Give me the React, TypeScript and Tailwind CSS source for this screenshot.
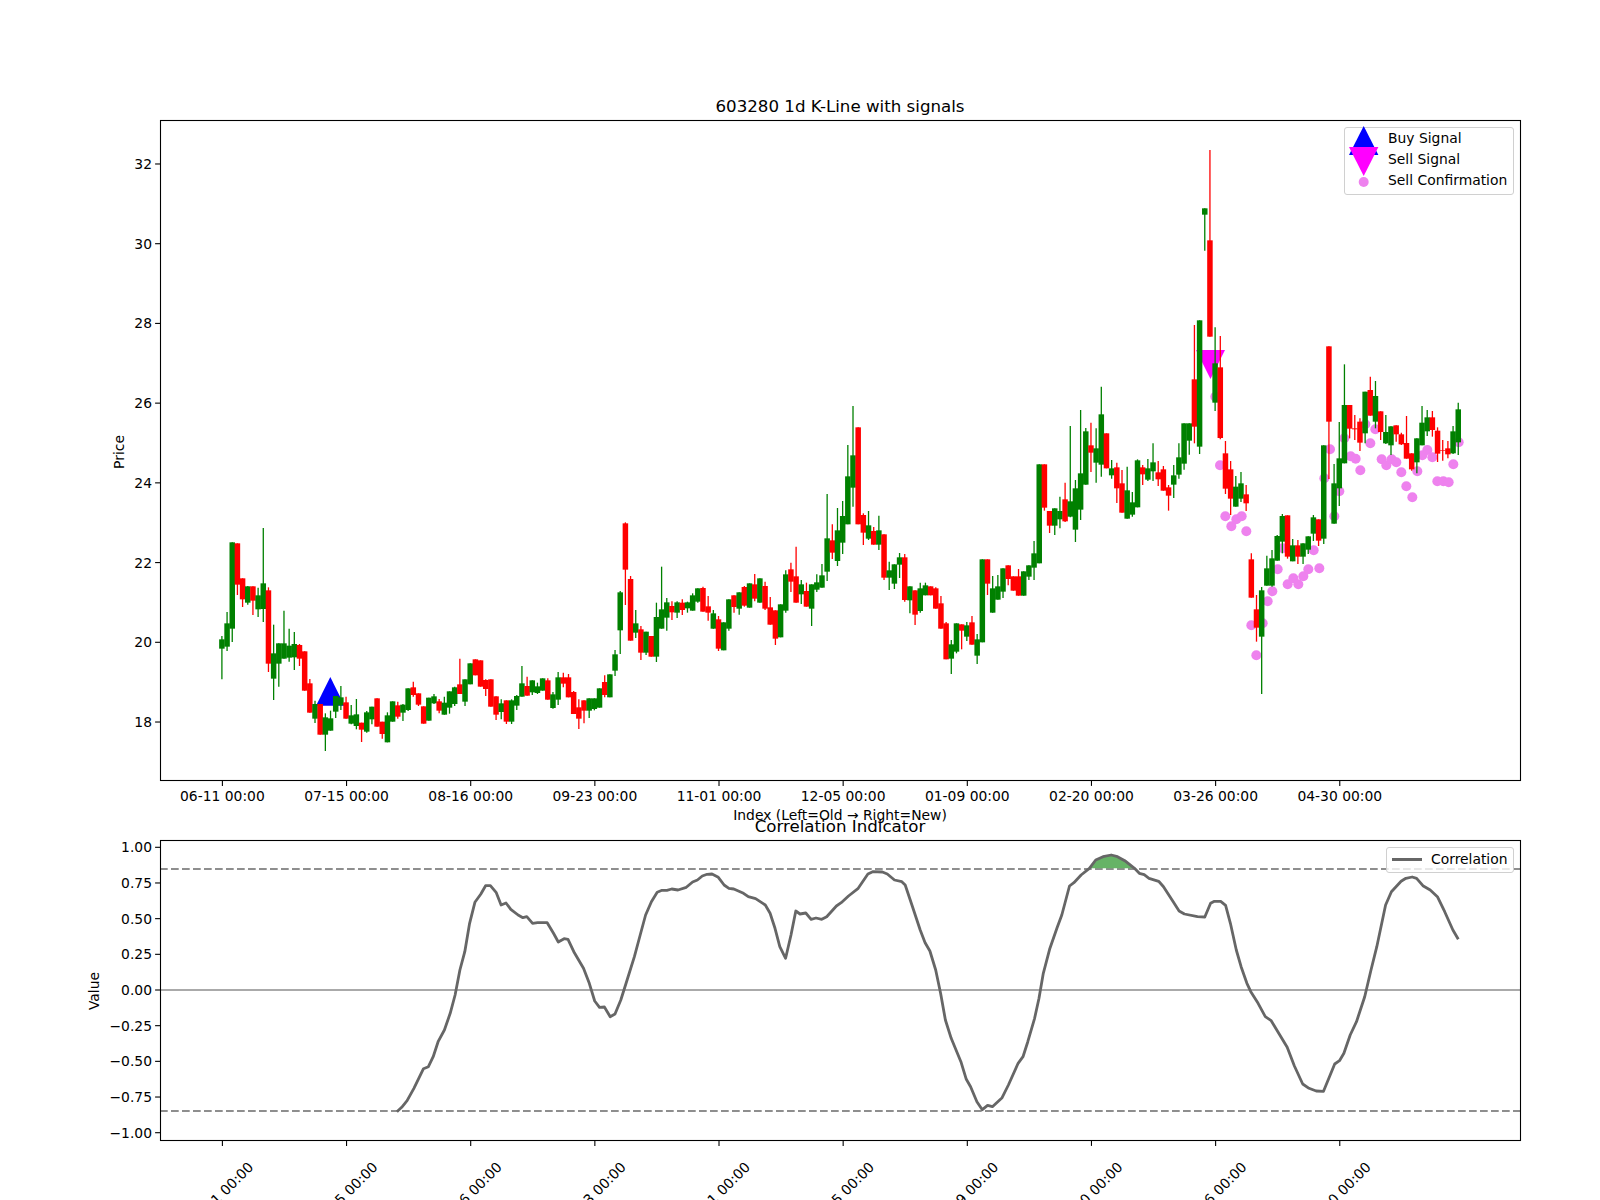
type Bar = [number, number, number, number, 'g' | 'r'];

// wick top, body top, body bottom, wick bottom, colour. Read off the chart in 3x steps.
const barsA: Bar[] = [
  [468, 478, 506, 598, 'g'], [396, 430, 500, 513, 'g'], [187, 187, 446, 486, 'g'], [190, 190, 314, 345, 'r'], [295, 295, 358, 381, 'r'],
  [318, 319, 368, 374, 'g'], [319, 319, 362, 405, 'r'], [323, 346, 388, 411, 'g'], [144, 310, 387, 426, 'g'], [322, 331, 551, 576, 'r'],
  [434, 520, 596, 660, 'g'], [490, 490, 551, 620, 'g'], [392, 490, 536, 536, 'g'], [446, 497, 533, 545, 'g'], [456, 492, 532, 570, 'g'],
  [492, 495, 536, 558, 'r'], [514, 514, 632, 632, 'r'], [597, 610, 698, 698, 'r'], [662, 672, 716, 729, 'g'], [672, 672, 764, 764, 'r'],
  [700, 712, 764, 813, 'g'], [692, 715, 752, 752, 'g'], [648, 648, 695, 714, 'g'], [618, 652, 676, 690, 'g'], [650, 667, 716, 716, 'r'],
  [675, 706, 731, 733, 'g'], [657, 703, 738, 748, 'g'], [728, 728, 749, 786, 'r'], [693, 697, 755, 758, 'g'], [680, 680, 718, 733, 'g'],
  [655, 655, 740, 740, 'r'], [725, 725, 762, 776, 'r'], [697, 706, 787, 787, 'g'], [664, 664, 725, 725, 'g'], [665, 676, 710, 716, 'r'],
  [672, 674, 698, 723, 'g'], [625, 625, 690, 693, 'g'], [605, 622, 645, 650, 'r'], [640, 640, 674, 678, 'r'], [679, 679, 731, 731, 'r'],
  [653, 653, 722, 722, 'g'], [642, 649, 670, 672, 'g'], [657, 664, 692, 700, 'r'], [650, 668, 704, 704, 'g'], [634, 634, 683, 701, 'g'],
  [620, 622, 672, 678, 'g'], [536, 613, 642, 642, 'r'], [598, 598, 665, 678, 'g'], [550, 550, 613, 613, 'g'], [538, 538, 586, 586, 'r'],
  [541, 541, 620, 620, 'r'], [598, 600, 627, 648, 'r'], [598, 598, 680, 680, 'r'], [649, 649, 704, 720, 'r'], [658, 670, 696, 718, 'g'],
  [661, 661, 725, 732, 'r'], [658, 661, 725, 732, 'g'], [645, 648, 677, 690, 'g'], [558, 610, 650, 650, 'g'], [590, 618, 647, 647, 'r'],
  [601, 601, 637, 645, 'g'], [608, 619, 639, 642, 'g'], [595, 595, 632, 632, 'g'], [595, 601, 659, 659, 'r'], [636, 643, 684, 686, 'g'],
  [576, 592, 659, 675, 'g'], [578, 592, 611, 622, 'r'], [582, 592, 652, 652, 'r'], [633, 636, 702, 702, 'r'], [658, 682, 716, 747, 'r'],
  [661, 661, 692, 730, 'r'], [655, 655, 692, 714, 'g'], [655, 655, 687, 691, 'g'], [625, 625, 683, 683, 'g'], [586, 606, 645, 652, 'r'],
  [583, 583, 652, 652, 'g'], [510, 523, 572, 588, 'g'],
];

const barsB: Bar[] = [
  [633, 637, 751, 822, 'g'], [427, 430, 569, 675, 'r'], [588, 597, 782, 782, 'r'], [690, 730, 758, 774, 'g'], [738, 748, 818, 840, 'r'],
  [755, 755, 818, 825, 'g'], [768, 768, 830, 830, 'r'], [668, 711, 830, 846, 'g'], [560, 688, 746, 746, 'g'], [654, 667, 713, 752, 'g'],
  [664, 678, 697, 720, 'r'], [664, 667, 698, 714, 'g'], [658, 668, 690, 705, 'r'], [665, 667, 685, 698, 'g'], [640, 646, 692, 692, 'g'],
  [625, 625, 665, 668, 'g'], [620, 624, 695, 695, 'r'], [648, 679, 698, 722, 'r'], [690, 700, 746, 746, 'g'], [708, 718, 806, 813, 'r'],
  [727, 727, 811, 811, 'g'], [658, 658, 746, 752, 'g'], [646, 646, 681, 698, 'r'], [637, 637, 686, 704, 'g'], [618, 621, 677, 680, 'r'],
  [610, 610, 683, 683, 'g'], [582, 613, 656, 664, 'r'], [595, 595, 668, 668, 'g'], [605, 618, 686, 690, 'r'], [651, 682, 734, 734, 'r'],
  [691, 691, 776, 795, 'r'], [673, 673, 772, 772, 'g'], [571, 583, 692, 698, 'g'], [548, 568, 605, 636, 'r'], [500, 589, 668, 668, 'r'],
  [600, 613, 643, 672, 'g'], [608, 633, 680, 680, 'r'], [613, 613, 686, 738, 'g'], [583, 607, 629, 636, 'g'], [552, 586, 623, 623, 'g'],
  [342, 475, 575, 603, 'g'], [433, 481, 518, 537, 'r'], [384, 451, 543, 558, 'g'], [363, 408, 488, 522, 'g'], [195, 289, 433, 433, 'g'],
  [78, 226, 323, 380, 'g'], [142, 142, 433, 433, 'r'], [400, 405, 458, 495, 'r'], [393, 436, 476, 480, 'g'], [441, 453, 494, 494, 'r'],
  [407, 451, 494, 510, 'g'], [463, 463, 593, 600, 'r'], [545, 571, 593, 630, 'g'], [553, 553, 611, 627, 'g'], [519, 532, 554, 594, 'g'],
  [522, 532, 660, 665, 'r'], [619, 619, 661, 700, 'g'], [631, 631, 704, 735, 'r'], [608, 625, 693, 698, 'g'], [608, 616, 646, 646, 'g'],
  [619, 619, 646, 646, 'r'], [622, 625, 686, 686, 'r'], [648, 670, 746, 746, 'r'], [726, 730, 838, 838, 'r'], [780, 793, 836, 882, 'g'],
  [730, 730, 815, 820, 'g'], [733, 733, 752, 808, 'r'], [726, 736, 770, 783, 'g'], [708, 727, 794, 794, 'r'], [762, 778, 827, 852, 'g'],
  [538, 538, 787, 787, 'g'], [538, 538, 611, 645, 'r'], [588, 625, 698, 698, 'g'], [585, 619, 659, 659, 'g'], [565, 565, 635, 654, 'g'],
  [556, 556, 597, 616, 'r'], [589, 589, 632, 632, 'r'], [567, 589, 647, 647, 'r'], [574, 574, 647, 647, 'g'], [556, 556, 590, 600, 'g'],
  [483, 520, 563, 600, 'g'], [253, 253, 550, 550, 'g'], [253, 253, 383, 392, 'r'], [393, 393, 437, 459, 'r'], [385, 385, 437, 465, 'g'],
  [350, 393, 418, 445, 'g'], [308, 358, 424, 426, 'r'], [138, 364, 410, 412, 'g'], [300, 325, 449, 486, 'g'], [90, 280, 389, 420, 'g'],
  [144, 154, 314, 314, 'g'], [128, 196, 218, 276, 'r'], [145, 205, 248, 308, 'g'],
];

const barsC: Bar[] = [
  [-40, 43, 194, 230, 'g'], [100, 100, 205, 205, 'r'], [180, 205, 226, 236, 'g'], [188, 202, 265, 309, 'r'], [210, 250, 338, 338, 'r'],
  [200, 271, 356, 356, 'g'], [276, 307, 344, 350, 'g'], [178, 181, 322, 322, 'g'], [195, 202, 223, 255, 'r'], [177, 205, 239, 243, 'g'],
  [130, 187, 214, 243, 'g'], [183, 217, 238, 258, 'r'], [198, 208, 272, 272, 'r'], [255, 262, 287, 332, 'r'], [195, 226, 254, 294, 'g'],
  [130, 172, 224, 236, 'g'], [70, 70, 191, 209, 'g'], [70, 70, 122, 164, 'g'], [-225, -62, 80, 130, 'r'], [-239, -239, 140, 162, 'g'],
  [-575, -575, -556, -448, 'g'], [-750, -479, -190, -190, 'r'], [-218, -110, 8, 33, 'g'], [-192, -98, 114, 118, 'r'], [123, 160, 266, 282, 'r'],
  [183, 208, 296, 345, 'r'], [228, 260, 320, 320, 'g'], [216, 250, 296, 306, 'g'], [255, 283, 310, 333, 'r'], [460, 478, 593, 593, 'r'],
  [585, 628, 683, 725, 'r'], [561, 571, 710, 882, 'g'], [467, 505, 557, 557, 'g'], [450, 475, 557, 560, 'g'], [405, 408, 482, 482, 'g'],
  [342, 348, 425, 460, 'g'], [346, 346, 470, 476, 'r'], [417, 436, 484, 484, 'g'], [420, 436, 470, 492, 'r'], [430, 430, 470, 492, 'g'],
  [409, 409, 449, 462, 'g'], [345, 352, 401, 423, 'g'], [358, 358, 422, 438, 'r'], [136, 136, 416, 432, 'g'], [-161, -161, 65, 237, 'r'],
  [192, 250, 371, 371, 'g'], [66, 175, 265, 318, 'g'], [-107, 15, 190, 190, 'g'], [15, 15, 86, 115, 'r'], [45, 85, 88, 120, 'r'],
  [55, 65, 128, 153, 'r'], [-25, -25, 100, 130, 'g'], [-70, -30, 47, 47, 'r'], [-57, -12, 65, 85, 'g'], [34, 34, 96, 120, 'r'],
  [45, 96, 130, 132, 'g'], [79, 79, 136, 165, 'g'], [76, 76, 103, 125, 'r'], [98, 103, 133, 135, 'r'], [48, 129, 176, 176, 'r'],
  [160, 160, 208, 212, 'r'], [115, 115, 187, 220, 'g'], [18, 68, 136, 136, 'g'], [30, 52, 94, 108, 'g'], [33, 52, 90, 110, 'r'],
  [82, 92, 161, 186, 'r'], [120, 150, 152, 182, 'r'], [123, 145, 163, 175, 'r'], [78, 94, 160, 162, 'g'], [8, 28, 127, 165, 'g'],
];

const confirmDots = [
  [346, -10], [360, 196], [376, 349], [394, 379], [409, 358], [425, 349], [439, 394], [454, 676], [469, 766], [488, 670], [503, 604], [517, 574],
  [533, 508], [548, 445], [563, 553], [580, 535], [595, 553], [610, 529], [625, 508], [641, 451], [658, 505], [673, 235], [690, 148], [718, 274],
  [703, 349], [733, 115], [752, 169], [767, 176], [781, 211], [796, 73], [811, 130], [826, 88], [845, 178], [859, 196], [875, 178], [889, 187],
  [904, 217], [919, 259], [937, 292], [952, 214], [967, 166], [982, 150], [997, 172], [1012, 244], [1030, 244], [1046, 247], [1060, 193], [1076, 127],
];

const corrLeft = [
  [695, 935], [705, 922], [716, 902], [730, 865], [750, 806], [760, 800], [770, 770], [780, 725], [793, 690], [805, 640], [815, 585], [825, 510],
  [835, 455], [845, 370], [856, 307], [868, 283], [878, 257], [888, 257], [900, 278], [910, 315], [920, 309], [930, 328], [945, 345], [955, 353],
  [963, 350], [975, 370], [985, 368], [1005, 368], [1018, 400], [1028, 426], [1040, 416], [1048, 418], [1060, 455], [1080, 505], [1092, 550],
  [1103, 603], [1113, 622], [1123, 621], [1135, 650], [1145, 642], [1157, 600], [1170, 540], [1185, 470], [1197, 405], [1208, 345], [1220, 305],
  [1232, 277], [1242, 271], [1252, 271], [1262, 267], [1275, 270], [1292, 262], [1305, 246], [1315, 240], [1325, 228], [1335, 223], [1345, 222],
  [1358, 232], [1370, 255], [1380, 265], [1390, 267], [1410, 280], [1420, 290], [1435, 296], [1455, 315], [1465, 340], [1475, 385], [1485, 440],
  [1497, 475], [1508, 405], [1518, 333],
];

const corrRight = [
  [0, 342], [12, 339], [23, 358], [33, 354], [45, 358], [55, 350], [75, 318], [85, 308], [100, 288], [120, 265], [140, 222], [150, 215], [170, 216],
  [180, 222], [195, 240], [210, 245], [217, 255], [232, 320], [248, 390], [258, 428], [268, 453], [280, 510], [290, 580], [300, 660], [312, 715],
  [332, 785], [343, 838], [352, 860], [365, 905], [376, 929], [387, 916], [397, 920], [417, 893], [430, 855], [450, 790], [460, 770], [470, 725],
  [484, 655], [493, 595], [502, 520], [515, 448], [530, 385], [540, 345], [556, 258], [565, 248], [580, 225], [597, 205], [610, 180], [625, 170],
  [642, 165], [655, 170], [670, 182], [690, 205], [700, 220], [710, 224], [720, 235], [740, 244], [750, 260], [770, 305], [782, 333], [793, 342],
  [820, 350], [835, 351], [847, 310], [855, 304], [868, 304], [878, 316], [888, 370], [900, 450], [910, 500], [922, 550], [930, 575], [945, 610],
  [960, 650], [972, 662], [1005, 742], [1020, 798], [1037, 852], [1050, 865], [1065, 873], [1080, 874], [1103, 792], [1113, 782], [1122, 760],
  [1135, 705], [1148, 665], [1165, 590], [1178, 510], [1190, 440], [1208, 315], [1220, 275], [1240, 244], [1250, 235], [1263, 231], [1272, 235],
  [1285, 257], [1300, 270], [1315, 290], [1330, 335], [1347, 390], [1358, 418],
];

const dates = ['06-11', '07-15', '08-16', '09-23', '11-01', '12-05', '01-09', '02-20', '03-26', '04-30'];
const tickX = dates.map((_, n) => 222.4 + 5.173 * n * 24);

const candles = [
  ...barsA.map((b) => ({ b, base: 480 })),
  ...barsB.map((b) => ({ b, base: 380 })),
  ...barsC.map((b) => ({ b, base: 400 })),
];

const corrPts = [
  ...corrLeft.map(([x, y]) => [60 + x / 2.063, 800 + y / 3]),
  ...corrRight.map(([x, y]) => [800 + x / 2.063, 800 + y / 3]),
];
const corrLine = corrPts.map(([x, y]) => `${x.toFixed(1)},${y.toFixed(1)}`).join(' ');
const peak = corrRight.filter(([x]) => x >= 597 && x <= 690);
const peakFill = peak.map(([x, y]) => `${(800 + x / 2.063).toFixed(1)},${(800 + y / 3).toFixed(1)}`).join(' ');

function XTicks({ y }: { y: number }) {
  return (
    <>
      {tickX.map((x) => (
        <line key={x} x1={x} x2={x} y1={y} y2={y + 4.9} stroke="black" strokeWidth={1.1} />
      ))}
    </>
  );
}

function YTick({ y, label }: { y: number; label: string }) {
  return (
    <>
      <line x1={155.1} x2={160} y1={y} y2={y} stroke="black" strokeWidth={1.1} />
      <text x={152} y={y + 5} textAnchor="end">{label}</text>
    </>
  );
}

function PricePlot() {
  return (
    <svg viewBox="0 120 1600 695" className="block w-[1600px] h-[695px] overflow-visible text-[13.89px]">
      {confirmDots.map(([x, y]) => (
        <circle key={`${x}-${y}`} cx={1100 + x / 3} cy={400 + y / 3} r={5} fill="#ee82ee" />
      ))}
      <polygon points="330.3,677 316,705.7 344.6,705.7" fill="#0000ff" />
      <polygon points="1196,350 1225,350 1210.5,379" fill="#ff00ff" />
      {candles.map(({ b, base }, i) => {
        const x = 221.9 + 5.173 * i;
        const color = b[4] === 'g' ? '#008000' : '#ff0000';
        return (
          <g key={i}>
            <line x1={x} x2={x} y1={base + b[0] / 3} y2={base + b[3] / 3} stroke={color} strokeWidth={1.3} />
            <rect x={x - 2.75} y={base + b[1] / 3} width={5.5} height={(b[2] - b[1]) / 3} fill={color} />
          </g>
        );
      })}
      <rect x={160.5} y={120.5} width={1360} height={660} fill="none" stroke="black" strokeWidth={1.1} />
      <XTicks y={781} />
      {dates.map((d, n) => (
        <text key={d} x={tickX[n]} y={801} textAnchor="middle">{d} 00:00</text>
      ))}
      {[18, 20, 22, 24, 26, 28, 30, 32].map((p) => (
        <YTick key={p} y={642.3 - (p - 20) * 39.86} label={String(p)} />
      ))}
      <text x={840} y={820} textAnchor="middle">Index (Left=Old → Right=New)</text>
      <text transform="translate(124 452) rotate(-90)" textAnchor="middle">Price</text>
    </svg>
  );
}

function CorrelationPlot() {
  const ticks = [1, 0.75, 0.5, 0.25, 0, -0.25, -0.5, -0.75, -1];
  return (
    <svg viewBox="0 840 1600 360" className="block w-[1600px] h-[360px] overflow-visible text-[13.89px]">
      <line x1={160} x2={1520} y1={990} y2={990} stroke="#aaaaaa" strokeWidth={2} />
      <line x1={160} x2={1520} y1={869} y2={869} stroke="#8e8e8e" strokeWidth={2.1} strokeDasharray="7.7 3.3" />
      <line x1={160} x2={1520} y1={1111} y2={1111} stroke="#8e8e8e" strokeWidth={2.1} strokeDasharray="7.7 3.3" />
      <polygon points={peakFill} fill="#66b366" />
      <polyline points={corrLine} fill="none" stroke="#666666" strokeWidth={2.8} strokeLinejoin="round" />
      <rect x={160.5} y={840.5} width={1360} height={300} fill="none" stroke="black" strokeWidth={1.1} />
      <XTicks y={1141} />
      {dates.map((d, n) => (
        <text key={d} transform={`translate(${tickX[n] + 2} 1198) rotate(-45)`} textAnchor="middle">{d} 00:00</text>
      ))}
      {ticks.map((v) => (
        <YTick key={v} y={990 - v * 142.7} label={v.toFixed(2).replace('-', '−')} />
      ))}
      <text transform="translate(99 991) rotate(-90)" textAnchor="middle">Value</text>
    </svg>
  );
}

function PriceLegend() {
  return (
    <div className="absolute left-[1344px] top-[7px] w-[170px] h-[68px] rounded-[3px] border border-[#d0d0d0] bg-white/80 flex flex-col pl-[43px] text-[13.89px] leading-[21px]">
      <svg viewBox="0 0 40 70" className="absolute left-[-1px] top-[-2px] w-[40px] h-[70px] overflow-visible">
        <polygon points="19.7,0 5,29 34.4,29" fill="#0000ff" />
        <polygon points="5,21 34.4,21 19.7,50" fill="#ff00ff" />
        <circle cx={19.7} cy={56} r={5} fill="#ee82ee" />
      </svg>
      <span>Buy Signal</span>
      <span>Sell Signal</span>
      <span>Sell Confirmation</span>
    </div>
  );
}

function CorrelationLegend() {
  return (
    <div className="absolute left-[1386px] top-[7px] w-[128px] h-[26px] rounded-[3px] border border-[#d0d0d0] bg-white/80 flex items-center gap-[9px] pl-[5px] pb-[2px] text-[13.89px]">
      <div className="w-[30px] h-[3px] bg-[#666666]" />
      <span>Correlation</span>
    </div>
  );
}

export default function App() {
  return (
    <div className="w-[1600px] h-[1200px] overflow-hidden bg-white text-black font-['DejaVu_Sans',sans-serif]">
      <h1 className="w-[1680px] h-[120px] flex items-end justify-center pb-[3px] text-[16.67px] leading-[20px] font-normal">
        603280 1d K-Line with signals
      </h1>
      <div className="relative h-[695px]">
        <PricePlot />
        <PriceLegend />
      </div>
      <h2 className="relative w-[1680px] h-[25px] flex items-end justify-center pb-[3px] text-[16.67px] leading-[20px] font-normal">
        Correlation Indicator
      </h2>
      <div className="relative h-[360px]">
        <CorrelationPlot />
        <CorrelationLegend />
      </div>
    </div>
  );
}
